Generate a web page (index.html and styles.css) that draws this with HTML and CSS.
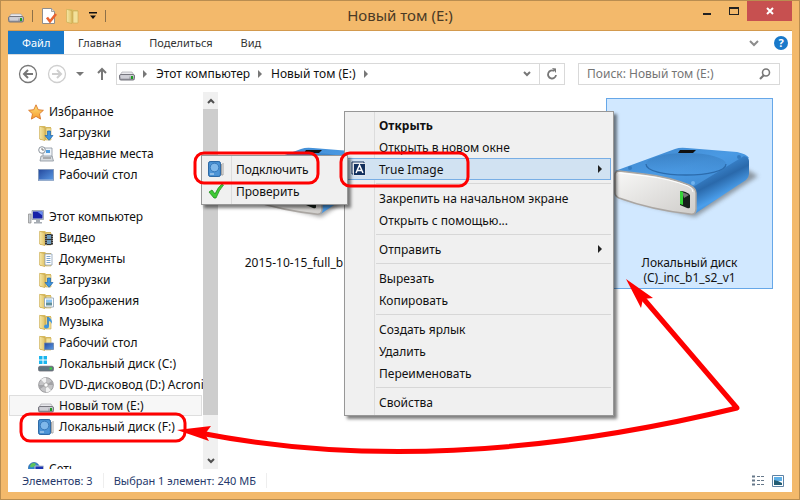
FILE: index.html
```html
<!DOCTYPE html>
<html lang="ru">
<head>
  <meta charset="UTF-8">
  <meta name="viewport" content="width=device-width, initial-scale=1.0">
  <title>Новый том (E:)</title>
  <link rel="stylesheet" href="styles.css">
</head>
<body>

  <!-- shared icon shapes -->
  <svg class="defs" width="0" height="0" aria-hidden="true">
    <defs>
      <linearGradient id="gFolder" x1="0" x2="1"><stop offset="0" stop-color="#f6e7a6"/><stop offset="1" stop-color="#dfc266"/></linearGradient>
      <linearGradient id="gDrive" x1="0" x2="0" y1="0" y2="1"><stop offset="0" stop-color="#dcdce2"/><stop offset="1" stop-color="#8b8b95"/></linearGradient>
      <linearGradient id="gScreen" x1="0" x2="1" y1="0" y2="1"><stop offset="0" stop-color="#24489c"/><stop offset="1" stop-color="#5b9be6"/></linearGradient>
      <linearGradient id="gStar" x1="0" x2="0" y1="0" y2="1"><stop offset="0" stop-color="#ffe27a"/><stop offset="1" stop-color="#f59a2c"/></linearGradient>
      <linearGradient id="gTop" x1="0" x2="1" y1="0" y2="1"><stop offset="0" stop-color="#3f86cb"/><stop offset="0.5" stop-color="#4a9ae4"/><stop offset="1" stop-color="#3c85cc"/></linearGradient>
      <linearGradient id="gSide" x1="0.3" y1="0.1" x2="0.7" y2="0.9"><stop offset="0" stop-color="#4596e2"/><stop offset="0.4" stop-color="#2a69ab"/><stop offset="0.7" stop-color="#4b9fec"/><stop offset="1" stop-color="#2e72b8"/></linearGradient>
      <linearGradient id="gFront" x1="0" x2="1" y1="0" y2="1"><stop offset="0" stop-color="#f8f8f7"/><stop offset="1" stop-color="#cfcdca"/></linearGradient>
      <linearGradient id="gRing" x1="0" x2="0" y1="0" y2="1"><stop offset="0" stop-color="#3477b8"/><stop offset="1" stop-color="#4d9ce6"/></linearGradient>
      <filter id="soft" x="-20%" y="-40%" width="140%" height="180%"><feGaussianBlur stdDeviation="2"/></filter>
    </defs>

    <symbol id="i-folder" viewBox="0 0 16 16">
      <path d="M2 1h5l1 1h5v13H2z" fill="#d9bd64"/>
      <path d="M8 3h5v12H8z" fill="#f3e19a" stroke="#c9a94f" stroke-width=".6"/>
      <path d="M1.500 1.300l5.500 1.400v13L1.500 14z" fill="url(#gFolder)" stroke="#c9a94f" stroke-width=".6"/>
    </symbol>
    <symbol id="i-download" viewBox="0 0 16 16">
      <use href="#i-folder"/>
      <path d="M9.500 6h3v4.500H15l-4 4.800-4-4.800h2.500z" fill="#3d94e0" stroke="#1c66ae" stroke-width=".7"/>
    </symbol>
    <symbol id="i-drive" viewBox="0 0 16 16">
      <path d="M3 6h10l2.500 4H.5z" fill="#e9e9ed" stroke="#9c9ca3" stroke-width=".6"/>
      <rect x=".5" y="8.500" width="15" height="5.500" rx="1.500" fill="url(#gDrive)" stroke="#77777f" stroke-width="1"/>
      <rect x="2" y="10" width="8" height="2.500" fill="#cfcfd6"/>
      <rect x="12" y="10" width="2" height="3" fill="#1f9e25"/>
    </symbol>
    <symbol id="i-acronis" viewBox="0 0 16 16">
      <rect x=".6" y=".6" width="11.800" height="14.800" rx="1.500" fill="#4c94d6" stroke="#215f9e" stroke-width="1"/>
      <circle cx="6.500" cy="6.500" r="4.300" fill="#7fb8ea" stroke="#2b6cae" stroke-width=".8"/>
      <path d="M2 13h4" stroke="#cfe5f8"/>
      <path d="M13.500 3v11h1.500V2" fill="none" stroke="#9a9a9a" stroke-width=".9"/>
    </symbol>
    <symbol id="i-desktop" viewBox="0 0 16 16">
      <rect x=".5" y="2.500" width="15" height="11" fill="url(#gScreen)" stroke="#7d93b5" stroke-width=".8"/>
      <path d="M1 12.500h14v1H1z" fill="#a9bfdc"/>
    </symbol>

    <symbol id="i-disk" viewBox="0 0 154 84">
      <path d="M6 54L82 73 145 32 128 22z" fill="#555" opacity=".55" filter="url(#soft)"/>
      <path d="M2 27L62 5q5-2 12-1l50 4q10 2 12 6L82 44q-2-1-6-2z" fill="url(#gTop)"/>
      <path d="M80 43L131 12q5 1 5 5v13q0 3-3 6L83 69q-3 2-3-3z" fill="url(#gSide)"/>
      <ellipse cx="73" cy="20" rx="40" ry="11" fill="url(#gRing)" opacity=".55"/>
      <path d="M33 20c0 7 18 11 40 11s40-4 40-11" fill="none" stroke="#2c6cad" stroke-width="1.300"/>
      <path d="M67 6h16l-3 3H65z" fill="#111"/>
      <circle cx="17" cy="24" r="2" fill="#347cc2"/><circle cx="80" cy="39" r="2" fill="#70b3ef"/><circle cx="126" cy="13" r="2" fill="#347cc2"/>
      <path d="M2 31q0-4 4-4l25 3q25 3 45 11 7 3 7 8v16q0 6-6 5-38-4-71-16-4-2-4-5z" fill="url(#gFront)" stroke="#aaa6a2" stroke-width="1.500"/>
      <path d="M4 32q0-3 3-3l26 3q24 3 42 10 5 2 5 6" fill="none" stroke="#fff"/>
      <path d="M67 47q6 0 10 4v12q0 2-3 1l-7-3z" fill="#16201a"/>
      <path d="M69 48q3 1 7 3l-5 3z" fill="#777"/>
      <path d="M67 47l3 1v13l-3-1z" fill="#35d438"/>
    </symbol>
  </svg>

  <div class="window">

    <header class="titlebar">
      <div class="quick">
        <svg class="icon"><use href="#i-drive"/></svg>
        <span class="divider"></span>
        <button class="plain" aria-label="Свойства">
          <svg class="icon" viewBox="0 0 16 16"><path d="M1.500.5h9l3 3v12h-12z" fill="#fff" stroke="#8d8d8d"/><path d="M10.500.5v3h3" fill="#ddd" stroke="#8d8d8d" stroke-width=".8"/><path d="M6 9.500l3 4L15 6" fill="none" stroke="#e8622f" stroke-width="2.600"/></svg>
        </button>
        <button class="plain" aria-label="Новая папка"><svg class="icon"><use href="#i-folder"/></svg></button>
        <button class="plain" aria-label="Настройка панели">
          <svg width="8" height="8" viewBox="0 0 8 8"><path d="M0 0h8v1.500H0zM1 3.500h6L4 7z" fill="#111"/></svg>
        </button>
        <span class="divider"></span>
      </div>
      <h1>Новый том (E:)</h1>
      <div class="controls">
        <button class="plain" aria-label="Свернуть"><svg width="10" height="10"><path d="M1 7h8v2H1z" fill="#222"/></svg></button>
        <button class="plain" aria-label="Развернуть"><svg width="10" height="10"><path d="M0 1h10v8H0zM1 3v5h8V3z" fill="#222" fill-rule="evenodd"/></svg></button>
        <button class="close plain" aria-label="Закрыть"><svg width="8" height="8"><path d="M1 1l6 6M7 1L1 7" stroke="#fff" stroke-width="2"/></svg></button>
      </div>
    </header>

    <div class="client">
      <nav class="ribbon">
        <button class="tab file">Файл</button>
        <button class="tab">Главная</button>
        <button class="tab">Поделиться</button>
        <button class="tab">Вид</button>
        <div class="ribbon-right">
          <button class="plain" aria-label="Развернуть ленту"><svg width="10" height="8"><path d="M1 2l4 4 4-4" fill="none" stroke="#8c8c8c" stroke-width="2"/></svg></button>
          <button class="help" aria-label="Справка">?</button>
        </div>
      </nav>

      <div class="navbar">
        <button class="plain" aria-label="Назад"><svg width="20" height="20" viewBox="0 0 20 20" fill="none" stroke="#777"><circle cx="10" cy="10" r="8.500" stroke-width="1.300"/><path d="M15 10H6M10 6l-4 4 4 4" stroke-width="2"/></svg></button>
        <button class="plain" aria-label="Вперёд"><svg width="20" height="20" viewBox="0 0 20 20" fill="none" stroke="#cfcfcf"><circle cx="10" cy="10" r="8.500" stroke-width="1.300"/><path d="M5 10h9M10 6l4 4-4 4" stroke-width="2"/></svg></button>
        <button class="plain" aria-label="Журнал"><svg width="8" height="6"><path d="M0 1h8L4 5z" fill="#777"/></svg></button>
        <button class="plain up" aria-label="Вверх"><svg width="10" height="14" fill="none" stroke="#777" stroke-width="2"><path d="M5 13V2M1 6l4-4 4 4"/></svg></button>
        <div class="address">
          <svg class="icon"><use href="#i-drive"/></svg>
          <svg class="arrow" width="5" height="8"><path d="M0 0l4 4-4 4z" fill="#777"/></svg>
          <a href="#">Этот компьютер</a>
          <svg class="arrow" width="5" height="8"><path d="M0 0l4 4-4 4z" fill="#777"/></svg>
          <a href="#">Новый том (E:)</a>
          <svg class="arrow" width="5" height="8"><path d="M0 0l4 4-4 4z" fill="#777"/></svg>
          <button class="plain drop" aria-label="Предыдущие расположения"><svg width="8" height="8"><path d="M1 2l3 3 3-3" fill="none" stroke="#777" stroke-width="2"/></svg></button>
          <button class="plain refresh" aria-label="Обновить"><svg width="12" height="12" fill="none" stroke="#777" stroke-width="1.800"><path d="M8 3a4 4 0 1 0 2 4"/><path d="M6 0l4 .5v4.500z" fill="#777" stroke="none"/></svg></button>
        </div>
        <div class="search">
          <input type="text" aria-label="Поиск" placeholder="Поиск: Новый том (E:)">
          <svg width="12" height="12" fill="none" stroke="#777"><circle cx="7" cy="4.500" r="3.500" stroke-width="1.600"/><path d="M5 7l-4 4" stroke-width="2.200"/></svg>
        </div>
      </div>

      <div class="content">
        <aside class="sidebar">
          <ul class="tree">
            <li><a href="#"><svg class="icon" viewBox="0 0 16 16"><path d="M8 .8l2.200 4.900 5.200.6-3.900 3.500 1.100 5.300L8 12.400l-4.600 2.700 1.100-5.300L.6 6.300l5.200-.6z" fill="url(#gStar)" stroke="#d9762a" stroke-width=".9"/></svg>Избранное</a>
              <ul>
                <li><a href="#"><svg class="icon"><use href="#i-download"/></svg>Загрузки</a></li>
                <li><a href="#"><svg class="icon" viewBox="0 0 16 16"><path d="M5 2h9v9H5z" fill="#eef3f8" stroke="#8a939c" stroke-width=".8"/><path d="M8 4h4v3H8z" fill="#4e9cdf"/><path d="M3 10h11l1.500 5H2z" fill="#d8dce0" stroke="#8a939c" stroke-width=".8"/><path d="M5 12h8" stroke="#777"/><circle cx="4" cy="4" r="3.300" fill="#fff" stroke="#8a939c"/><path d="M4 2v2h2" fill="none" stroke="#555" stroke-width=".8"/></svg>Недавние места</a></li>
                <li><a href="#"><svg class="icon"><use href="#i-desktop"/></svg>Рабочий стол</a></li>
              </ul>
            </li>
            <li><a href="#"><svg class="icon" viewBox="0 0 16 16"><path d="M.5 5h2.500v9H.5z" fill="#c9cdd2" stroke="#888" stroke-width=".7"/><path d="M4 1.500h11.500v9H4z" fill="#c8d0da" stroke="#8a939c" stroke-width=".7"/><path d="M5 2.500h9.500v7H5z" fill="#1722a8"/><path d="M9 2.500h5.500v4z" fill="#6a8ef0"/><path d="M8 11h4v2H8zM6 13h8v1.500H6z" fill="#a6acb3"/></svg>Этот компьютер</a>
              <ul>
                <li><a href="#"><svg class="icon" viewBox="0 0 16 16"><use href="#i-folder"/><path d="M7 4h8v11H7z" fill="#333"/><path d="M9 5h4v4H9zM9 10h4v4H9z" fill="#6d9cc0"/><path d="M8 4v11M14.200 4v11" stroke="#ddd" stroke-width=".8" stroke-dasharray="1 1"/></svg>Видео</a></li>
                <li><a href="#"><svg class="icon" viewBox="0 0 16 16"><use href="#i-folder"/><path d="M7 3h7v11H7z" fill="#fff" stroke="#8a9fb5" stroke-width=".8"/><path d="M8.500 5.500h4M8.500 7.500h4M8.500 9.500h4M8.500 11.500h4" stroke="#6f9cc9" stroke-width=".9"/></svg>Документы</a></li>
                <li><a href="#"><svg class="icon"><use href="#i-download"/></svg>Загрузки</a></li>
                <li><a href="#"><svg class="icon" viewBox="0 0 16 16"><use href="#i-folder"/><path d="M6.500 5h9v9h-9z" fill="#fff" stroke="#8a9fb5" stroke-width=".8"/><path d="M8 6.500h6v3H8z" fill="#8cc5f2"/><path d="M8 9.500h6v3H8z" fill="#5f8f9a"/></svg>Изображения</a></li>
                <li><a href="#"><svg class="icon" viewBox="0 0 16 16"><use href="#i-folder"/><path d="M10 3v9" stroke="#2276c4" stroke-width="1.600"/><path d="M10.500 3q4 2 3.500 7-1-3-3.500-3z" fill="#3d94e0"/><ellipse cx="8.500" cy="12.500" rx="2.500" ry="2" fill="#3d94e0"/></svg>Музыка</a></li>
                <li><a href="#"><svg class="icon" viewBox="0 0 16 16"><use href="#i-folder"/><path d="M6.500 8h9v6.500h-9z" fill="url(#gScreen)" stroke="#6d86ab" stroke-width=".8"/></svg>Рабочий стол</a></li>
                <li><a href="#"><svg class="icon" viewBox="0 0 16 16"><path d="M1 0h3.500v3.500H1zM5.500 0H9v3.500H5.500zM1 4.500h3.500V8H1zM5.500 4.500H9V8H5.500z" fill="#19b5ee"/><path d="M2 9h12l1.500 2H.5z" fill="#dcdce0"/><rect x=".5" y="10.500" width="15" height="4.500" rx="1.300" fill="#5f7480" stroke="#6c6c75" stroke-width=".8"/><path d="M11.500 11.500h2.500v2h-2.500z" fill="#39d63f"/></svg>Локальный диск (C:)</a></li>
                <li><a href="#"><svg class="icon" viewBox="0 0 16 16"><circle cx="8" cy="8" r="7.400" fill="#c4c4c6" stroke="#8f8f92" stroke-width=".8"/><path d="M8 8L3 2.500A7 7 0 0 1 8 .8zM8 8l5 5.500a7 7 0 0 1-5 1.700z" fill="#f2f2f2"/><path d="M8 8l6-4a7 7 0 0 1 1 4zM8 8l-6 4a7 7 0 0 1-1-4z" fill="#a3a3a6"/><circle cx="8" cy="8" r="2.200" fill="#fff" stroke="#999" stroke-width=".8"/></svg>DVD-дисковод (D:) Acronis</a></li>
                <li><a href="#" class="current"><svg class="icon"><use href="#i-drive"/></svg>Новый том (E:)</a></li>
                <li><a href="#"><svg class="icon"><use href="#i-acronis"/></svg>Локальный диск (F:)</a></li>
              </ul>
            </li>
            <li><a href="#"><svg class="icon" viewBox="0 0 16 16"><circle cx="6" cy="7" r="5.500" fill="#2f86d0" stroke="#1c5f9e" stroke-width=".7"/><path d="M3 3q3-2 5 0-1 3-3 3-3 1-3-1z" fill="#5fc35c"/><path d="M7 5h8.500v6.500H7z" fill="#1c34b4" stroke="#b8c3d0"/></svg>Сеть</a></li>
          </ul>
        </aside>

        <div class="scrollbar">
          <button class="plain" aria-label="Прокрутить вверх"><svg width="8" height="8"><path d="M1 6l3-3 3 3" fill="none" stroke="#505050" stroke-width="2"/></svg></button>
          <div class="thumb"></div>
          <button class="plain bottom" aria-label="Прокрутить вниз"><svg width="8" height="8"><path d="M1 2l3 3 3-3" fill="none" stroke="#505050" stroke-width="2"/></svg></button>
        </div>

        <main class="files">
          <div class="item">
            <div class="thumbnail"><svg class="disk"><use href="#i-disk"/></svg></div>
            <span class="line">2015-10-15_full_b1_s1_v1</span>
          </div>
          <div class="item selected">
            <div class="thumbnail"><svg class="disk"><use href="#i-disk"/></svg></div>
            <span>Локальный диск (C)_inc_b1_s2_v1</span>
          </div>
        </main>
      </div>

      <footer class="status">
        <span>Элементов: 3</span>
        <span>Выбран 1 элемент: 240 МБ</span>
        <div class="views">
          <button class="plain" aria-label="Таблица"><svg width="14" height="12" fill="none" stroke="#66788a"><path d="M1 1.500h3M1 5.500h3M1 9.500h3" stroke-width="2"/><path d="M6 1.500h3M10 1.500h3M6 5.500h3M10 5.500h3M6 9.500h3M10 9.500h3"/></svg></button>
          <button class="plain" aria-label="Крупные значки"><svg width="12" height="12"><path d="M.5.5h11v11H.5z" fill="#fff" stroke="#5e82a4"/><path d="M2 2h8v4H2z" fill="#5eb0e8"/><path d="M2 5l4 1 4 2v2H2z" fill="#235d74"/></svg></button>
        </div>
      </footer>
    </div>

    <!-- context menu -->
    <div class="menu context" role="menu">
      <button role="menuitem" class="bold">Открыть</button>
      <button role="menuitem">Открыть в новом окне</button>
      <button role="menuitem" class="active more"><svg class="icon" viewBox="0 0 16 16"><path d="M1 1h12v12H1z" fill="#fff" stroke="#12305e"/><path d="M2.500 2.500h12v12h-12z" fill="#12305e" stroke="#fff" stroke-width=".8"/><path d="M5 12l3.500-8L12 12M6.500 9.500h4" fill="none" stroke="#fff" stroke-width="1.500"/></svg>True Image</button>
      <hr>
      <button role="menuitem">Закрепить на начальном экране</button>
      <button role="menuitem">Открыть с помощью...</button>
      <hr>
      <button role="menuitem" class="more">Отправить</button>
      <hr>
      <button role="menuitem">Вырезать</button>
      <button role="menuitem">Копировать</button>
      <hr>
      <button role="menuitem">Создать ярлык</button>
      <button role="menuitem">Удалить</button>
      <button role="menuitem">Переименовать</button>
      <hr>
      <button role="menuitem">Свойства</button>
    </div>

    <div class="menu submenu" role="menu">
      <button role="menuitem"><svg class="icon"><use href="#i-acronis"/></svg>Подключить</button>
      <button role="menuitem"><svg class="icon" viewBox="0 0 16 16"><path d="M1 9l3-2 3 4q3-7 7-10l1.500 1Q11 7 8 15H6z" fill="#3fcb35" stroke="#1f8f1d" stroke-width=".8"/></svg>Проверить</button>
    </div>

    <!-- red marks over the window -->
    <svg class="marks" width="800" height="500" viewBox="0 0 800 500" fill="none" stroke="#fe0000" stroke-width="3" aria-hidden="true">
      <rect x="195" y="153" width="123" height="30" rx="9"/>
      <rect x="341" y="153" width="127" height="33" rx="9"/>
      <rect x="21" y="414" width="164" height="27" rx="9"/>
      <path d="M200 433Q440 480 737 408L642 297" stroke-width="5" stroke-linejoin="round"/>
      <path d="M177 430l34-4-6 8 4 7zM626 279l27 19-10 1-2 9z" fill="#fe0000" stroke="none"/>
    </svg>
  </div>

</body>
</html>
```
FILE: styles.css
```css
* {
  box-sizing: border-box;
}

body {
  margin: 0;
  font-family: "Noto Sans", "Open Sans", sans-serif;
  font-size: 12px;
  color: #111;
}

a {
  color: inherit;
  text-decoration: none;
}

button {
  font: inherit;
  color: inherit;
  border: none;
  background: none;
  padding: 0;
}

.defs {
  position: absolute;
}

.icon {
  width: 16px;
  height: 16px;
  flex: none;
}

.plain {
  display: flex;
  align-items: center;
  justify-content: center;
}

/* window frame */
.window {
  position: relative;
  display: flex;
  flex-direction: column;
  height: 100vh;
  overflow: hidden;
  padding: 0 7px 7px;
  background: #f3b96b;
  border: 1px solid #b98d50;
}

.titlebar {
  display: grid;
  grid-template-columns: 1fr auto 1fr;
  height: 29px;
  flex: none;
}

.titlebar h1 {
  margin: 0;
  font-size: 15px;
  font-weight: 400;
  line-height: 29px;
  color: #4a3a25;
}

.quick {
  display: flex;
  align-items: center;
  gap: 8px;
}

.divider {
  width: 1px;
  height: 12px;
  background: #8d7048;
}

.controls {
  display: flex;
  justify-content: flex-end;
  align-items: flex-start;
}

.controls button {
  width: 27px;
  height: 20px;
}

.controls .close {
  width: 45px;
  background: #c75050;
}

.client {
  flex: 1;
  min-height: 0;
  display: flex;
  flex-direction: column;
  background: #fff;
  border-top: 1px solid #d39a4e;
}

/* ribbon */
.ribbon {
  display: flex;
  height: 24px;
  flex: none;
  border-bottom: 1px solid #dadbdc;
  font-size: 11px;
}

.tab {
  padding: 0 14px;
  color: #333;
}

.tab.file {
  width: 56px;
  background: #1979ca;
  color: #fff;
}

.ribbon-right {
  display: flex;
  align-items: center;
  gap: 15px;
  margin-left: auto;
  padding-right: 4px;
}

.help {
  width: 14px;
  height: 14px;
  border-radius: 50%;
  background: #1979ca;
  color: #fff;
  font-weight: 700;
  line-height: 14px;
}

/* address row */
.navbar {
  display: flex;
  align-items: center;
  gap: 9px;
  height: 37px;
  flex: none;
  padding: 0 12px 0 10px;
}

.up {
  margin-left: 4px;
}

.address {
  flex: 1;
  display: flex;
  align-items: center;
  gap: 8px;
  height: 22px;
  border: 1px solid #d9d9d9;
  padding-left: 2px;
}

.drop {
  margin-left: auto;
}

.refresh {
  align-self: stretch;
  width: 25px;
  border-left: 1px solid #d9d9d9;
}

.search {
  display: flex;
  align-items: center;
  width: 202px;
  height: 22px;
  margin-left: 4px;
  padding: 0 8px;
  border: 1px solid #d9d9d9;
}

.search input {
  flex: 1;
  min-width: 0;
  padding: 0;
  border: none;
  outline: none;
  font: inherit;
}

.search input::placeholder {
  color: #757575;
}

/* tree */
.content {
  flex: 1;
  min-height: 0;
  display: flex;
}

.sidebar {
  width: 195px;
  flex: none;
  overflow: hidden;
  padding: 9px 1px 0;
}

.tree,
.tree ul {
  list-style: none;
  margin: 0;
  padding: 0;
}

.tree > li {
  margin-bottom: 21px;
}

.tree a {
  display: flex;
  align-items: center;
  gap: 5px;
  height: 21px;
  padding-left: 19px;
  white-space: nowrap;
}

.tree ul a {
  padding-left: 29px;
}

.tree a.current {
  padding-left: 28px;
  background: #f7f7f7;
  border: 1px solid #dedede;
}

.scrollbar {
  width: 15px;
  flex: none;
  display: flex;
  flex-direction: column;
  background: #f0f0f0;
}

.scrollbar button {
  height: 17px;
  flex: none;
}

.thumb {
  flex: 0 1 306px;
  background: #cdcdcd;
}

.scrollbar .bottom {
  margin-top: auto;
}

/* files */
.files {
  flex: 1;
  display: grid;
  grid-template-columns: repeat(auto-fill, 167px);
  align-items: start;
  gap: 20px;
  padding: 6px 0 0 14px;
}

.item {
  height: 191px;
  padding: 0 20px;
  border: 1px solid transparent;
  text-align: center;
  line-height: 15px;
}

.item.selected {
  grid-column: 3;
  background: #d1e8ff;
  border-color: #66a7e8;
}

.line {
  display: flex;
  justify-content: center;
  white-space: nowrap;
}

.thumbnail {
  display: flex;
  align-items: center;
  justify-content: center;
  height: 156px;
  padding-top: 18px;
}

.disk {
  width: 154px;
  height: 84px;
  flex: none;
}

/* status bar */
.status {
  display: flex;
  align-items: center;
  height: 23px;
  flex: none;
  padding: 0 8px 0 14px;
  font-size: 11px;
  color: #26396b;
}

.status span {
  margin-right: 10px;
  padding-right: 10px;
  border-right: 1px solid #eee;
}

.views {
  display: flex;
  gap: 7px;
  margin-left: auto;
}

/* menus */
.menu {
  position: absolute;
  display: flex;
  flex-direction: column;
  padding: 2px;
  background: linear-gradient(to right, transparent 29px, #dcdcdc 29px, #dcdcdc 30px, transparent 30px) #f0f0f0;
  border: 1px solid #979797;
  box-shadow: 3px 3px 3px rgba(0, 0, 0, 0.5);
}

.context {
  left: 343px;
  top: 110px;
  width: 270px;
}

.submenu {
  left: 200px;
  top: 154px;
  width: 147px;
}

.menu button {
  position: relative;
  height: 22px;
  padding-left: 32px;
  text-align: left;
  white-space: nowrap;
}

.menu button .icon {
  position: absolute;
  left: 4px;
  top: 3px;
}

.menu .bold {
  font-weight: 700;
}

.menu .active {
  background: #d1e2f2;
  outline: 1px solid #78aee5;
  outline-offset: -1px;
}

.menu .more::after {
  content: "";
  position: absolute;
  right: 9px;
  top: 7px;
  border: 4px solid transparent;
  border-left-color: #222;
  border-right: none;
}

.menu hr {
  width: calc(100% - 29px);
  height: 1px;
  margin: 3px 0 3px 29px;
  border: none;
  background: #d7d7d7;
}

.marks {
  position: absolute;
  left: -1px;
  top: -1px;
  pointer-events: none;
}
```
